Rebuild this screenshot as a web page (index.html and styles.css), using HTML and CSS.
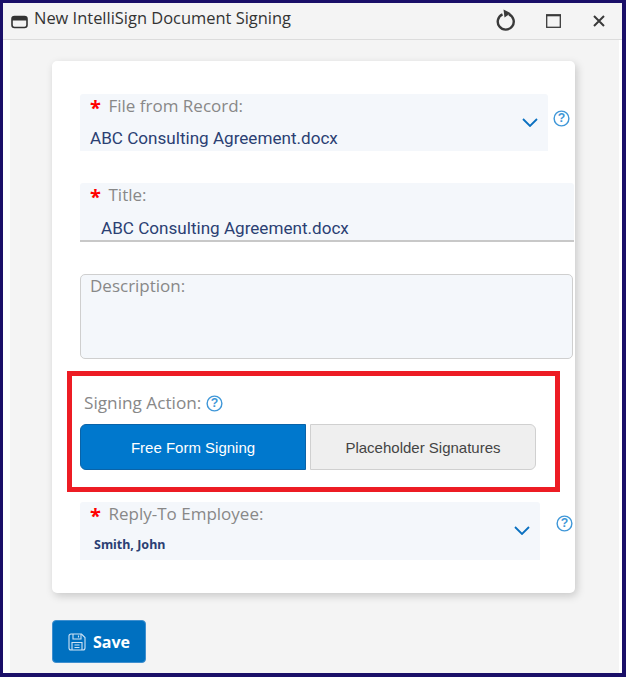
FILE: index.html
```html
<!DOCTYPE html>
<html lang="en">
<head>
<meta charset="utf-8">
<title>New IntelliSign Document Signing</title>
<link rel="stylesheet" href="styles.css">
</head>
<body>
<div class="frame">
  <header class="titlebar">
    <svg class="win-icon" viewBox="0 0 17 14" width="17" height="14"><rect x="1" y="1.5" width="15" height="11" rx="2.5" fill="none" stroke="#333" stroke-width="1.6"/><path d="M1 4.5A3 3 0 0 1 4 1.5H13A3 3 0 0 1 16 4.5V5.5H1Z" fill="#333"/></svg>
    <span class="titletext">New IntelliSign Document Signing</span>
    <div class="controls">
      <svg class="ctl-refresh" viewBox="0 0 20 22" width="20" height="22"><path d="M13 5.3A8 8 0 1 1 6.5 5.3" fill="none" stroke="#3a3a3a" stroke-width="2.4"/><path d="M7.5 0.6L14.8 4.2L8.5 8.6Z" fill="#3a3a3a"/></svg>
      <svg class="ctl-max" viewBox="0 0 15 14" width="15" height="14"><rect x="0.7" y="1" width="13.6" height="12.3" fill="none" stroke="#3a3a3a" stroke-width="1.3"/><rect x="0" y="0.3" width="15" height="2" fill="#3a3a3a"/></svg>
      <svg class="ctl-close" viewBox="0 0 12 12" width="12" height="12"><path d="M1 1L11 11M11 1L1 11" stroke="#3a3a3a" stroke-width="2"/></svg>
    </div>
  </header>
  <main class="content">
    <section class="card">
      <div class="row row-file">
        <div class="field select w-file">
          <div class="label"><span class="req">*</span>File from Record:</div>
          <div class="value">ABC Consulting Agreement.docx</div>
          <svg class="chev" viewBox="0 0 16 9" width="16" height="9"><path d="M1 1L8 8L15 1" fill="none" stroke="#0a70c0" stroke-width="1.8"/></svg>
        </div>
        <svg class="help help-file" viewBox="0 0 18 18" width="17" height="17"><circle cx="9" cy="9" r="7.8" fill="none" stroke="#3f97d8" stroke-width="1.5"/><text x="9" y="13" text-anchor="middle" class="help-q">?</text></svg>
      </div>
      <div class="field title-field">
        <div class="label"><span class="req">*</span>Title:</div>
        <div class="value indent">ABC Consulting Agreement.docx</div>
      </div>
      <div class="description"><span class="desc-label">Description:</span></div>
      <div class="signing">
        <div class="signing-label">Signing Action:
          <svg class="help" viewBox="0 0 18 18" width="17" height="17"><circle cx="9" cy="9" r="7.8" fill="none" stroke="#3f97d8" stroke-width="1.5"/><text x="9" y="13" text-anchor="middle" class="help-q">?</text></svg>
        </div>
        <div class="seg">
          <button class="seg-btn active" type="button">Free Form Signing</button>
          <button class="seg-btn" type="button">Placeholder Signatures</button>
        </div>
      </div>
      <div class="row row-reply">
        <div class="field select w-reply">
          <div class="label"><span class="req">*</span>Reply-To Employee:</div>
          <div class="value small">Smith, John</div>
          <svg class="chev" viewBox="0 0 16 9" width="16" height="9"><path d="M1 1L8 8L15 1" fill="none" stroke="#0a70c0" stroke-width="1.8"/></svg>
        </div>
        <svg class="help help-reply" viewBox="0 0 18 18" width="17" height="17"><circle cx="9" cy="9" r="7.8" fill="none" stroke="#3f97d8" stroke-width="1.5"/><text x="9" y="13" text-anchor="middle" class="help-q">?</text></svg>
      </div>
    </section>
    <button class="save" type="button">
      <svg viewBox="0 0 18 18" width="18" height="18"><path d="M3 1H13.5L17 4.5V15A2 2 0 0 1 15 17H3A2 2 0 0 1 1 15V3A2 2 0 0 1 3 1Z" fill="none" stroke="#cfe3f4" stroke-width="1.1"/><path d="M5 1V6H13V1M10.5 2.5V4.5M4 17V9.5H14V17M6.5 12H11.5M6.5 14.5H11.5" fill="none" stroke="#cfe3f4" stroke-width="1.1"/></svg>
      <span>Save</span>
    </button>
  </main>
</div>
</body>
</html>
```
FILE: styles.css
```css
* { box-sizing: border-box; }
html, body { margin: 0; padding: 0; }
body { width: 626px; height: 677px; overflow: hidden; font-family: "Open Sans", "Noto Sans", sans-serif; background: #fff; }
.frame { width: 626px; height: 677px; border: solid #1a0f68; border-width: 3px 4px 4px 3px; background: #fff; display: flex; flex-direction: column; }
.titlebar { height: 37px; flex: none; background: #f4f4f4; border-bottom: 1px solid #dcdcdc; display: flex; align-items: center; padding: 0 17px 0 8px; }
.win-icon { margin-right: 6px; margin-top: 1px; flex: none; }
.titletext { font-size: 16.45px; color: #333; margin-top: -7px; }
.controls { margin-left: auto; display: flex; align-items: center; }
.ctl-refresh { margin-right: 30px; margin-top: -2px; }
.ctl-max { margin-right: 32px; }
.content { flex: 1; background: #f4f4f4; margin: 0 3px 0 7px; padding: 21px 0 0 42px; }
.card { width: 523px; height: 532px; background: #fff; border-radius: 5px; box-shadow: 2px 3px 8px rgba(0,0,0,.18); padding: 33px 0 0 28px; }
.row { display: flex; align-items: flex-start; }
.field { background: #f4f7fb; position: relative; border-radius: 3px 3px 0 0; }
.w-file { width: 468px; height: 57px; }
.w-reply { width: 460px; height: 58px; }
.label { font-size: 17px; line-height: 22px; color: #888; padding: 1px 0 0 10px; display: flex; }
.req { color: #f00; font-weight: 700; font-size: 20px; width: 18.5px; flex: none; line-height: 26px; }
.value { font-family: "Roboto", "Open Sans", sans-serif; font-size: 17.1px; line-height: 22px; color: #2b3f73; padding: 6px 0 0 10px; }
.value.indent { padding-left: 21px; padding-top: 7px; }
.value.small { font-family: "Noto Sans", sans-serif; font-weight: 700; font-size: 12.5px; line-height: 18px; padding: 7px 0 0 14px; }
.chev { position: absolute; right: 10px; top: 24px; }
.help { vertical-align: -3px; flex: none; }
.help-q { font: 700 13px "Liberation Sans", sans-serif; fill: #3f97d8; }
.help-file { margin: 16px 0 0 5px; }
.help-reply { margin: 13px 0 0 16px; }
.title-field { width: 494px; height: 59px; margin-top: 32px; border-bottom: 2px solid #c8c8c8; }
.description { width: 493px; height: 85px; margin-top: 32px; background: #f4f7fb; border: 1px solid #cfcfcf; border-radius: 5px; padding: 0 9px; font-size: 17px; line-height: 22px; color: #888; }
.signing { width: 493px; height: 121px; margin: 12px 0 0 -13px; border: 5px solid #ed1c24; padding: 16px 0 0 8px; }
.signing-label { font-size: 17.2px; line-height: 22px; color: #888; display: flex; align-items: center; gap: 5px; padding-left: 4px; }
.seg { display: flex; gap: 4px; margin-top: 10px; }
.seg-btn { width: 226px; height: 46px; padding: 0; font: 15px "Liberation Sans", sans-serif; border: 1px solid #d0d0d0; background: #efefef; color: #444; border-radius: 0 6px 6px 0; }
.seg-btn.active { background: #0078cd; border-color: #0a63a8; color: #fff; border-radius: 6px 0 0 6px; }
.row-reply { margin-top: 10px; }
.save { margin-top: 27px; width: 94px; height: 43px; padding: 0 0 0 15px; background: #0070c0; border: 1px solid #3f8fcf; border-radius: 4px; color: #fff; font: 700 16px "Open Sans", sans-serif; display: flex; align-items: center; gap: 7px; }
```
